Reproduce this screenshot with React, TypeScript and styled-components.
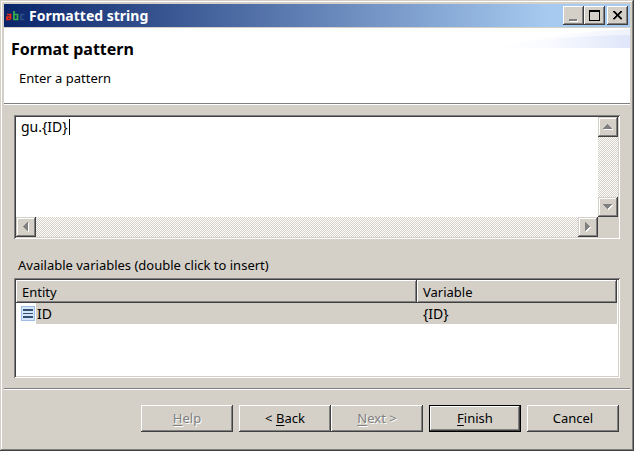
import React, { useState } from "react";
import styled, { createGlobalStyle, css } from "styled-components";

const FACE = "#d4d0c8";
const SHADOW = "#808080";
const DARK = "#404040";

const GlobalStyle = createGlobalStyle`
  * { box-sizing: border-box; }
  html, body { margin: 0; background: ${FACE}; }
  body, button, textarea, table {
    font-family: "Noto Sans", "Open Sans", sans-serif;
    font-size: 13px;
    line-height: 18px;
    color: #000;
  }
`;

const raised = css`
  background: ${FACE};
  border: 0;
  box-shadow: inset -1px -1px ${DARK}, inset 1px 1px #fff, inset -2px -2px ${SHADOW};
`;

const Dialog = styled.main`
  display: flex;
  flex-direction: column;
  min-height: 100vh;
  padding: 4px;
  background: ${FACE};
  box-shadow: inset -1px -1px ${DARK}, inset 1px 1px ${FACE}, inset -2px -2px ${SHADOW}, inset 2px 2px #fff;
`;

const TitleBar = styled.header`
  display: flex;
  align-items: center;
  height: 23px;
  padding: 0 2px;
  background: linear-gradient(90deg, #0a246a 0%, #a6caf0 87%);
`;

const AppIcon = styled.svg`
  flex: none;
  margin-right: 3px;
`;

const Title = styled.h1`
  flex: 1;
  margin: 0;
  font-size: 14px;
  line-height: 22px;
  font-weight: 700;
  color: #fff;
`;

const CaptionButton = styled.button<{ $gap?: boolean }>`
  ${raised}
  display: grid;
  place-items: center;
  width: 21px;
  height: 19px;
  padding: 0;
  margin-left: ${(p) => (p.$gap ? "2px" : "0")};
`;

const Banner = styled.section`
  display: flex;
  justify-content: space-between;
  height: 77px;
  margin-top: 1px;
  background: #fff;
  border-bottom: 1px solid #fff;
  box-shadow: inset 0 -1px ${SHADOW};
`;

const BannerText = styled.div`
  padding: 9px 7px;
`;

const BannerTitle = styled.h2`
  margin: 0;
  font-size: 16px;
  line-height: 24px;
  font-weight: 700;
`;

const BannerNote = styled.p`
  margin: 8px 0 0 8px;
`;

const Content = styled.section`
  display: flex;
  flex: 1;
  flex-direction: column;
  padding: 10px;
`;

const sunken = css`
  padding: 2px;
  background: #fff;
  box-shadow: inset 1px 1px ${SHADOW}, inset -1px -1px #fff, inset 2px 2px ${DARK}, inset -2px -2px ${FACE};
`;

const Editor = styled.div`
  ${sunken}
  display: grid;
  grid-template-columns: 1fr 20px;
  grid-template-rows: 100px 20px;
`;

const EditArea = styled.div`
  position: relative;
  display: flex;
`;

const PatternInput = styled.textarea`
  flex: 1;
  min-width: 0;
  padding: 1px 5px;
  border: 0;
  outline: 0;
  resize: none;
  overflow: hidden;
  font-size: 14px;
  background: transparent;
  caret-color: transparent;
`;

const Caret = styled.span`
  position: absolute;
  left: 53px;
  top: 2px;
  width: 1px;
  height: 16px;
  background: #000;
`;

const ScrollTrack = styled.div<{ $vertical?: boolean }>`
  display: flex;
  flex-direction: ${(p) => (p.$vertical ? "column" : "row")};
  justify-content: space-between;
  background: repeating-conic-gradient(#fff 0 25%, ${FACE} 0 50%) 0 0 / 2px 2px;
`;

const ScrollButton = styled.button`
  display: grid;
  place-items: center;
  width: 20px;
  height: 20px;
  padding: 0;
  border: 0;
  background: ${FACE};
  box-shadow: inset -1px -1px ${DARK}, inset 1px 1px ${FACE}, inset -2px -2px ${SHADOW}, inset 2px 2px #fff;
`;

const Corner = styled.div`
  background: ${FACE};
`;

const ListLabel = styled.h3`
  margin: 17px 0 4px 4px;
  font-size: 13px;
  line-height: 18px;
  font-weight: 400;
`;

const ListBox = styled.div`
  ${sunken}
  flex: 1;
  padding-right: 3px;
`;

const VariableTable = styled.table`
  width: 100%;
  table-layout: fixed;
  border-collapse: collapse;
`;

const HeadCell = styled.th<{ $wide?: boolean }>`
  ${raised}
  width: ${(p) => (p.$wide ? "401px" : "auto")};
  height: 23px;
  padding: 0 6px;
  text-align: left;
  font-weight: 400;
`;

const Cell = styled.td`
  height: 21px;
  padding: 0 6px;
  font-size: 14px;
  background: ${FACE};
`;

const IconCell = styled.td`
  height: 21px;
  padding: 0;
`;

const Entity = styled.div`
  display: flex;
  align-items: center;
  height: 21px;
  padding-left: 5px;
`;

const EntityName = styled.span`
  flex: 1;
  margin-left: 1px;
  padding-left: 1px;
  font-size: 14px;
  line-height: 21px;
  background: ${FACE};
`;

const Footer = styled.footer`
  display: flex;
  justify-content: flex-end;
  gap: 6px;
  padding: 17px 11px 15px;
  box-shadow: inset 0 1px ${SHADOW}, inset 0 2px #fff;
`;

const StepButtons = styled.div`
  display: flex;
`;

const PushButton = styled.button<{ $primary?: boolean }>`
  ${raised}
  width: 92px;
  height: 27px;
  padding: 0 0 2px;
  ${(p) =>
    p.$primary &&
    css`
      box-shadow: inset 0 0 0 1px #000, inset -2px -2px ${DARK}, inset 2px 2px #fff, inset -3px -3px ${SHADOW};
    `}
  &:disabled {
    color: ${SHADOW};
    text-shadow: 1px 1px #fff;
  }
`;

const Key = styled.span`
  text-decoration: underline;
  text-underline-offset: 2px;
`;

const ARROWS = {
  up: "M5 3h1v1h1v1h1v1h1v1h1v1H1V7h1V6h1V5h1V4h1z",
  down: "M1 3h9v1H9v1H8v1H7v1H6v1H5V7H4V6H3V5H2V4H1z",
  left: "M3 5h1V4h1V3h1V2h1V1h1v9H7V9H6V8H5V7H4V6H3z",
  right: "M3 1h1v1h1v1h1v1h1v1h1v1H7v1H6v1H5v1H4v1H3z",
};

function Arrow({ to }: { to: keyof typeof ARROWS }) {
  return (
    <ScrollButton type="button" aria-label={`Scroll ${to}`}>
      <svg width="12" height="12" shapeRendering="crispEdges">
        <path d={ARROWS[to]} fill="#fff" transform="translate(1 1)" />
        <path d={ARROWS[to]} fill={SHADOW} />
      </svg>
    </ScrollButton>
  );
}

function BannerSwoosh() {
  return (
    <svg width="140" height="20" aria-hidden="true">
      <defs>
        <linearGradient id="haze">
          <stop offset="0" stopColor="#fff" />
          <stop offset="0.4" stopColor="#fafbff" />
          <stop offset="1" stopColor="#dfe6f9" />
        </linearGradient>
        <linearGradient id="glow">
          <stop offset="0" stopColor="#fff" />
          <stop offset="0.5" stopColor="#fdfdff" />
          <stop offset="1" stopColor="#eef2fc" />
        </linearGradient>
      </defs>
      <path d="M0 20Q70 4 140 1V20z" fill="url(#glow)" />
      <path d="M0 20Q60 8 140 7V20z" fill="url(#haze)" />
    </svg>
  );
}

export default function App() {
  const [pattern, setPattern] = useState("gu.{ID}");
  return (
    <>
      <GlobalStyle />
      <Dialog>
        <TitleBar>
          <AppIcon width="20" height="16" viewBox="0 0 20 16" fill="none" aria-hidden="true">
            <path d="M1 6.5h3.5v5M4 9H1v2.5h3" stroke="#f02a10" strokeWidth="1.7" />
            <path d="M8 3v8.5h3.5v-5H8" stroke="#35b34a" strokeWidth="1.7" />
            <path d="M18.5 6.5h-3.5v5h3.5" stroke="#2c5086" strokeWidth="1.7" />
          </AppIcon>
          <Title>Formatted string</Title>
          <CaptionButton type="button" aria-label="Minimize">
            <svg width="13" height="13" shapeRendering="crispEdges">
              <path d="M3 11h8v2H3z" fill="#fff" />
              <path d="M2 10h8v2H2z" fill={SHADOW} />
            </svg>
          </CaptionButton>
          <CaptionButton type="button" aria-label="Maximize">
            <svg width="11" height="11" shapeRendering="crispEdges">
              <path fillRule="evenodd" d="M0 0h11v11H0zM1 2v8h9V2z" fill="#000" />
            </svg>
          </CaptionButton>
          <CaptionButton type="button" $gap aria-label="Close">
            <svg width="9" height="9" shapeRendering="crispEdges">
              <path
                d="M0 0h2v1H0zM7 0h2v1H7zM1 1h2v1H1zM6 1h2v1H6zM2 2h2v1H2zM5 2h2v1H5zM3 3h3v2H3zM2 5h2v1H2zM5 5h2v1H5zM1 6h2v1H1zM6 6h2v1H6zM0 7h2v1H0zM7 7h2v1H7z"
                fill="#000"
                stroke="#000"
                strokeWidth="0.3"
              />
            </svg>
          </CaptionButton>
        </TitleBar>
        <Banner>
          <BannerText>
            <BannerTitle>Format pattern</BannerTitle>
            <BannerNote>Enter a pattern</BannerNote>
          </BannerText>
          <BannerSwoosh />
        </Banner>
        <Content>
          <Editor>
            <EditArea>
              <PatternInput
                aria-label="Pattern"
                spellCheck={false}
                value={pattern}
                onChange={(e) => setPattern(e.target.value)}
              />
              <Caret />
            </EditArea>
            <ScrollTrack $vertical>
              <Arrow to="up" />
              <Arrow to="down" />
            </ScrollTrack>
            <ScrollTrack>
              <Arrow to="left" />
              <Arrow to="right" />
            </ScrollTrack>
            <Corner />
          </Editor>
          <ListLabel id="variables">Available variables (double click to insert)</ListLabel>
          <ListBox>
            <VariableTable aria-labelledby="variables">
              <thead>
                <tr>
                  <HeadCell $wide>Entity</HeadCell>
                  <HeadCell>Variable</HeadCell>
                </tr>
              </thead>
              <tbody>
                <tr onDoubleClick={() => setPattern(pattern + "{ID}")}>
                  <IconCell>
                    <Entity>
                      <svg width="14" height="15" shapeRendering="crispEdges" aria-hidden="true">
                        <rect x="0.5" y="0.5" width="13" height="14" rx="1" fill="#d3e6fb" stroke="#9dbde6" />
                        <path d="M2 3h10v2H2zM2 7h10v1H2zM2 10h10v2H2z" fill="#33506e" />
                      </svg>
                      <EntityName>ID</EntityName>
                    </Entity>
                  </IconCell>
                  <Cell>{"{ID}"}</Cell>
                </tr>
              </tbody>
            </VariableTable>
          </ListBox>
        </Content>
        <Footer>
          <PushButton type="button" disabled>
            <Key>H</Key>elp
          </PushButton>
          <StepButtons>
            <PushButton type="button">
              &lt; <Key>B</Key>ack
            </PushButton>
            <PushButton type="button" disabled>
              <Key>N</Key>ext &gt;
            </PushButton>
          </StepButtons>
          <PushButton type="button" $primary>
            <Key>F</Key>inish
          </PushButton>
          <PushButton type="button">Cancel</PushButton>
        </Footer>
      </Dialog>
    </>
  );
}
